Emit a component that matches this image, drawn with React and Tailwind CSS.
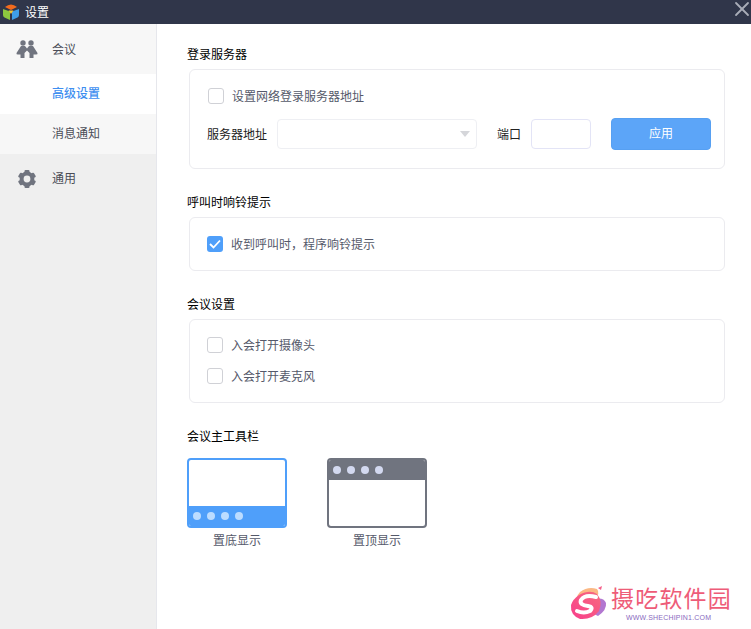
import { X } from 'lucide-react';

const font = { fontFamily: '"Noto Sans CJK SC", "Liberation Sans", sans-serif' };

function Logo() {
    return (
        <svg width="18" height="18" viewBox="0 0 18 18" className="ml-[2px]" aria-hidden="true">
            <path d="M1 6 L8 8.5 V17 L2.5 14.5 Q1 13.5 1 12 Z" fill="#8cc63f" />
            <path d="M17 6 L10 8.5 V17 L15.5 14.5 Q17 13.5 17 12 Z" fill="#3f9fe8" />
            <path d="M3 4 Q9 -1 15 4 L9 7 Z" fill="#f26b1d" />
            <path d="M6.5 7.5 L11.5 7.5 L9 11 Z" fill="#f7c531" />
        </svg>
    );
}

function MeetingIcon() {
    return (
        <svg width="22" height="18" viewBox="0 0 22 18" fill="#70747f" aria-hidden="true">
            <circle cx="7" cy="3" r="2.7" />
            <circle cx="15" cy="3" r="2.7" />
            <path d="M5 6 H9 L11 8.5 L13 6 H17 L21.5 13 Q22 14.5 20 14.5 H17.5 V18 H13.5 V13 L11 10.5 L8.5 13 V18 H4.5 V14.5 H2 Q0 14.5 .5 13 Z" />
        </svg>
    );
}

function GearIcon() {
    return (
        <svg width="18" height="18" viewBox="0 0 18 18" fill="#70747f" aria-hidden="true">
            <circle cx="9" cy="9" r="5.4" fill="none" stroke="#70747f" strokeWidth="4" />
            {[0, 60, 120, 180, 240, 300].map((deg) => (
                <rect key={deg} x="6.5" y="0" width="5" height="4" rx="1" transform={`rotate(${deg} 9 9)`} />
            ))}
        </svg>
    );
}

function SideItem({ icon, label, className, labelClass }) {
    return (
        <div className={`flex items-center ${className}`}>
            <div className="w-[52px] flex justify-center pl-[2px]">{icon}</div>
            <span className={labelClass}>{label}</span>
        </div>
    );
}

function Checkbox({ checked }) {
    if (checked) {
        return (
            <span className="w-4 h-4 rounded-[3px] bg-[#4f9ffa] flex items-center justify-center">
                <svg width="12" height="10" viewBox="0 0 12 10" fill="none" stroke="#ffffff" strokeWidth="1.8" aria-hidden="true">
                    <path d="M1 5 L4.5 8.5 L11 1.5" />
                </svg>
            </span>
        );
    }
    return <span className="w-4 h-4 rounded-[3px] border border-[#d0d1d6] bg-white" />;
}

function CheckRow({ label, checked }) {
    return (
        <div className="flex items-center gap-2 text-[#55596a]">
            <Checkbox checked={checked} />
            <span>{label}</span>
        </div>
    );
}

function Section({ title, className, children }) {
    return (
        <section>
            <h2 className="h-[18px] leading-[18px] text-black">{title}</h2>
            <div className={`ml-[2px] mt-[6px] w-[536px] rounded-md border border-[#ebebef] bg-white ${className}`}>
                {children}
            </div>
        </section>
    );
}

function ToolbarThumb({ label, color, dots, top }) {
    const bar = (
        <div className={`h-5 flex items-center gap-[6px] px-1 ${color}`}>
            {[0, 1, 2, 3].map((i) => (
                <span key={i} className={`w-2 h-2 rounded-full ${dots}`} />
            ))}
        </div>
    );
    return (
        <div className="w-[100px] flex flex-col items-center">
            <div className={`w-full h-[70px] rounded-[4px] border-2 flex flex-col overflow-hidden bg-white ${top ? 'border-[#70747f]' : 'border-[#4f9ffa]'}`}>
                {top && bar}
                <div className="flex-1" />
                {!top && bar}
            </div>
            <span className="mt-[3px] h-[18px] leading-[18px] text-[#55596a]">{label}</span>
        </div>
    );
}

function Watermark() {
    return (
        <div className="absolute left-[570px] top-[586px] flex items-start">
            <svg width="37" height="35" viewBox="0 0 37 35" aria-hidden="true">
                <defs>
                    <linearGradient id="wm" x1="0" y1="1" x2="1" y2="0">
                        <stop offset="0" stopColor="#f83f8c" />
                        <stop offset="1" stopColor="#f76a7e" />
                    </linearGradient>
                </defs>
                <path d="M10 6 Q18 0 27 3 Q31 8 24 12 L8 18 Q5 11 10 6 Z" fill="#fbb884" />
                <path d="M22 14 Q33 10 36 17 Q37 24 28 30 L20 26 Z" fill="#b277d0" />
                <path d="M9 9 Q20 3 27 8 Q33 15 29 25 Q22 34 10 33 Q0 29 1 19 Q3 13 9 9 Z" fill="url(#wm)" />
                <path d="M26 11 Q15 8 11 14 Q9 19 18 20 Q24 21 20 25 Q14 28 7 25" fill="none" stroke="#ffffff" strokeWidth="4" strokeLinecap="round" />
                <path d="M28 2 L32 0 L31 4 Z" fill="#f5608a" />
            </svg>
            <div className="ml-[4px] flex flex-col items-start">
                <span className="h-[22px] leading-[22px] text-[23px] text-[#ee5c78] tracking-[1.2px]">摄吃软件园</span>
                <span className="mt-[6px] ml-[15px] h-2 leading-2 text-[7px] tracking-[0.2px] text-[#8a6ac0]" style={{ fontFamily: '"Liberation Sans", sans-serif' }}>
                    WWW.SHECHIPIN1.COM
                </span>
            </div>
        </div>
    );
}

export default function App() {
    return (
        <div className="relative w-[751px] h-[629px] overflow-hidden bg-white text-xs flex flex-col" style={font}>
            <header className="h-6 shrink-0 bg-[#30364a] flex items-center text-white">
                <Logo />
                <span className="ml-[5px]">设置</span>
                <X className="ml-auto mr-[-3px] mt-[-6px] text-[#a9adb8]" size={24} strokeWidth={1.8} />
            </header>
            <div className="flex-1 flex">
                <aside className="w-[157px] shrink-0 bg-[#efefef] border-r border-[#e6e7ec] text-[#4a4d57]">
                    <SideItem icon={<MeetingIcon />} label="会议" className="h-[50px] bg-[#f7f7f7]" />
                    <div className="h-10 bg-white flex items-center pl-[52px] pb-[2px] text-[#3f8ff0] font-medium">高级设置</div>
                    <div className="h-10 bg-[#f7f7f7] flex items-center pl-[52px] pb-[2px]">消息通知</div>
                    <SideItem icon={<GearIcon />} label="通用" labelClass="mb-[2px]" className="h-[50px]" />
                </aside>
                <main className="flex-1 pl-[30px] pt-[21px] flex flex-col">
                    <Section title="登录服务器" className="h-[100px] pl-[17px] pt-[18px]">
                        <div className="pl-[1px]">
                            <CheckRow label="设置网络登录服务器地址" />
                        </div>
                        <div className="mt-[14px] flex items-center text-[#222222]">
                            <span className="w-[70px] shrink-0">服务器地址</span>
                            <div className="w-[200px] h-[30px] shrink-0 rounded-[4px] border border-[#eeeff3] bg-white flex items-center justify-end pr-[6px]">
                                <span className="w-0 h-0 border-x-[5px] border-x-transparent border-t-[6px] border-t-[#d5d6da]" />
                            </div>
                            <span className="ml-[20px] w-[34px] shrink-0">端口</span>
                            <div className="w-[60px] h-[30px] shrink-0 rounded-[4px] border border-[#e3e4f6] bg-white" />
                            <button type="button" className="ml-[20px] w-[100px] h-8 shrink-0 pb-[2px] rounded-[4px] bg-[#5ca5f8] border border-[#57a0f2] text-white">应用</button>
                        </div>
                    </Section>
                    <div className="mt-[24px]">
                        <Section title="呼叫时响铃提示" className="h-[54px] px-[17px] flex items-center">
                            <CheckRow label="收到呼叫时，程序响铃提示" checked />
                        </Section>
                    </div>
                    <div className="mt-[24px]">
                        <Section title="会议设置" className="h-[84px] px-[17px] pb-[2px] flex flex-col justify-center gap-[15px]">
                            <CheckRow label="入会打开摄像头" />
                            <CheckRow label="入会打开麦克风" />
                        </Section>
                    </div>
                    <h2 className="mt-[24px] h-[18px] leading-[18px] text-black">会议主工具栏</h2>
                    <div className="mt-[13px] flex gap-10">
                        <ToolbarThumb label="置底显示" color="bg-[#4f9ffa]" dots="bg-[#bcdcff]" />
                        <ToolbarThumb label="置顶显示" color="bg-[#70747f]" dots="bg-[#d3d9f0]" top />
                    </div>
                </main>
            </div>
            <Watermark />
        </div>
    );
}
